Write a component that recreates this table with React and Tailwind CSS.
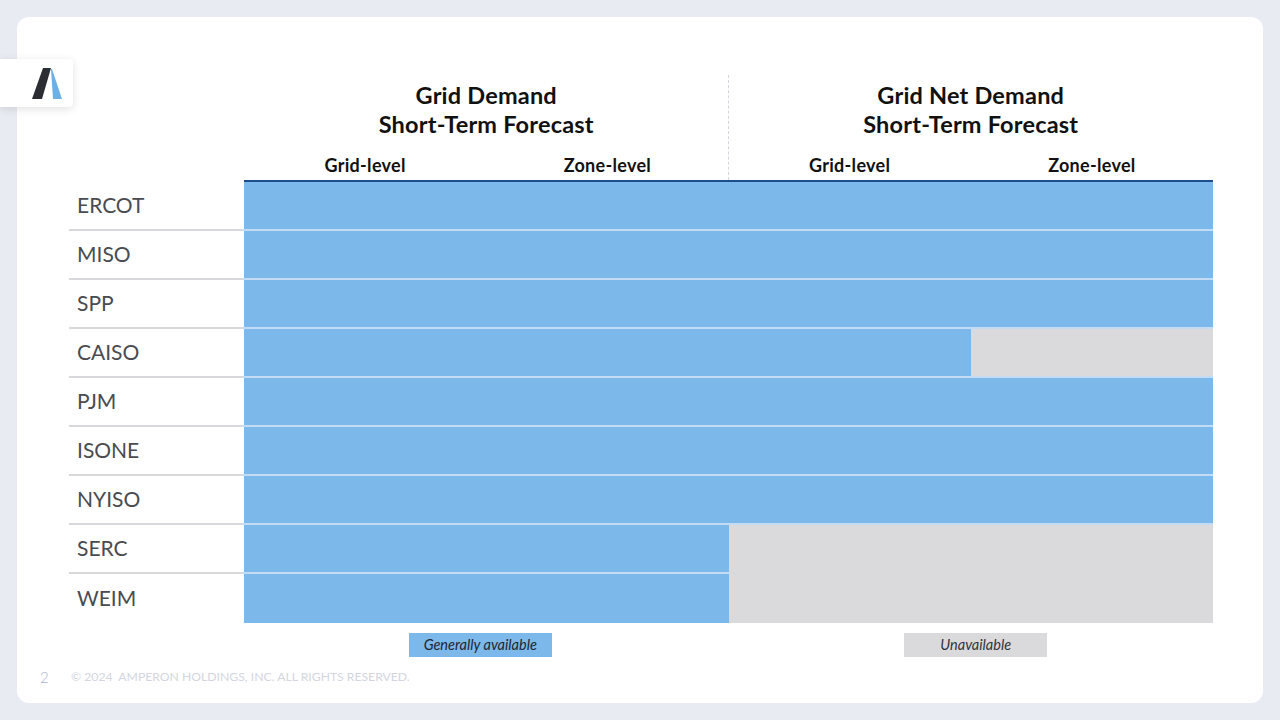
import React from "react";

const rows = [
  { name: "ERCOT", blue: 4 },
  { name: "MISO", blue: 4 },
  { name: "SPP", blue: 4 },
  { name: "CAISO", blue: 3 },
  { name: "PJM", blue: 4 },
  { name: "ISONE", blue: 4 },
  { name: "NYISO", blue: 4 },
  { name: "SERC", blue: 2, greyLine: false },
  { name: "WEIM", blue: 2 },
];

const font = { fontFamily: "Lato, 'Noto Sans', sans-serif" };

const Logo = () => (
  <svg width="73" height="48" viewBox="0 0 73 48">
    <polygon points="43,9 51,9 42,40 32,40" fill="#2b2d33" />
    <polygon points="51,10 52,10 62,40 53,40" fill="#6cb0e6" />
  </svg>
);

const App = () => {
  return (
    <div className="w-[1280px] h-[720px] bg-[#e8ebf2] p-[17px]" style={font}>
      <div className="relative w-full h-full bg-white rounded-[12px] pl-[23px] pt-[58px] flex flex-col">
        {/* logo tab */}
        <div className="absolute left-[-17px] top-[42px] w-[73px] h-[48px] bg-white rounded-r-[4px] shadow-[0_2px_8px_rgba(0,0,0,0.12)]">
          <Logo />
        </div>

        <div className="ml-[29px] w-[1144px]">
          {/* column headings */}
          <div className="grid grid-cols-[175px_1fr_1fr] h-[105px]">
            <div />
            <div className="flex flex-col items-center pt-[6px]">
              <div className="text-[23.5px] leading-[29px] font-bold text-[#111] text-center tracking-[0.2px]">
                Grid Demand
                <br />
                Short-Term Forecast
              </div>
              <div className="grid grid-cols-2 w-full mt-[15px] text-[18px] leading-[22px] font-bold text-[#111] tracking-[0.3px]">
                <div className="text-center">Grid-level</div>
                <div className="text-center">Zone-level</div>
              </div>
            </div>
            <div className="flex flex-col items-center pt-[6px] border-l border-dashed border-[#d4d6dc] -ml-px">
              <div className="text-[23.5px] leading-[29px] font-bold text-[#111] text-center tracking-[0.2px]">
                Grid Net Demand
                <br />
                Short-Term Forecast
              </div>
              <div className="grid grid-cols-2 w-full mt-[15px] text-[18px] leading-[22px] font-bold text-[#111] tracking-[0.3px]">
                <div className="text-center">Grid-level</div>
                <div className="text-center">Zone-level</div>
              </div>
            </div>
          </div>

          {/* header rule */}
          <div className="grid grid-cols-[175px_1fr]">
            <div />
            <div className="h-[2px] bg-[#1d4d8c]" />
          </div>

          {/* rows */}
          {rows.map((r, i) => {
            const last = i === rows.length - 1;
            return (
              <div key={r.name} className="grid grid-cols-[175px_1fr] h-[49px]">
                <div
                  className={
                    "flex items-center pl-[8px] pb-[1px] text-[21px] text-[#4a4b50] " +
                    (last ? "" : "border-b-2 border-[#d7d8dc]")
                  }
                >
                  {r.name}
                </div>
                <div className="flex">
                  <div
                    className={
                      "bg-[#7db8ea] " + (last ? "" : "border-b-2 border-[#c4dcf3]")
                    }
                    style={{ width: `${(r.blue / 4) * 100}%` }}
                  />
                  {r.blue < 4 && (
                    <div
                      className={
                        "flex-1 bg-[#dad9dc] " +
                        (last || r.greyLine === false ? "" : "border-b-2 border-[#c4dcf3]")
                      }
                    />
                  )}
                </div>
              </div>
            );
          })}

          {/* legend */}
          <div className="grid grid-cols-[175px_1fr_1fr] mt-[10px]">
            <div />
            <div className="flex justify-center pr-[12px]">
              <div className="w-[143px] h-[24px] bg-[#7db8ea] flex items-center justify-center text-[14.5px] italic text-[#1f2633]">
                Generally available
              </div>
            </div>
            <div className="flex justify-center pl-[10px]">
              <div className="w-[143px] h-[24px] bg-[#dad9dc] flex items-center justify-center text-[14.5px] italic text-[#33343a]">
                Unavailable
              </div>
            </div>
          </div>
        </div>

        {/* footer */}
        <div className="flex items-center mt-[11px] h-[18px]">
          <span className="text-[15px] font-light text-[#a8b6cc] w-[31px]">2</span>
          <span className="text-[12.2px] text-[#d3d6de] uppercase">
            © 2024&nbsp; Amperon Holdings, Inc. All rights reserved.
          </span>
        </div>
      </div>
    </div>
  );
};

export default App;
